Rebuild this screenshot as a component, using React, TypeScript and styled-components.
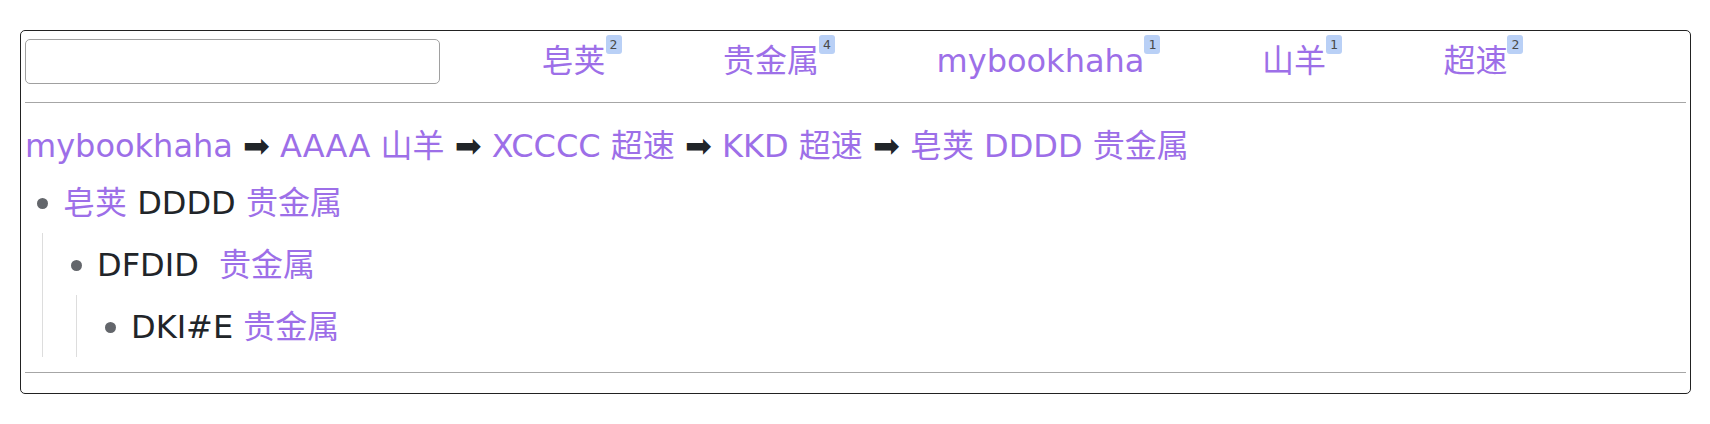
import React from 'react'
import styled, { createGlobalStyle } from 'styled-components'

const GlobalStyle = createGlobalStyle`
  body {
    margin: 0;
    background: #fff;
    color: #212529;
    font-family: 'DejaVu Sans', 'Noto Sans CJK SC', sans-serif;
  }
`

const LINK = '#9d6fe8'

const Page = styled.div`
  padding: 30px 19px 30px 20px;
`

const Card = styled.div`
  border: 1px solid #222;
  border-radius: 5px;
  padding: 8px 4px 20px;
`

const Header = styled.div`
  display: flex;
  align-items: center;
  gap: 101.5px;
  height: 45px;
`

const SearchInput = styled.input`
  box-sizing: border-box;
  width: 415px;
  height: 45px;
  margin: 0;
  border: 1px solid #a0a0a0;
  border-radius: 5px;
  background: #fff;
  outline: none;
`

const NavItem = styled.div`
  display: flex;
  align-items: flex-start;
  height: 45px;
`

const Link = styled.a`
  color: ${LINK};
  text-decoration: none;
  font-size: 32px;
`

const NavLink = styled(Link)`
  line-height: 45px;
`

const Badge = styled.span`
  box-sizing: border-box;
  margin-top: -4px;
  height: 19px;
  min-width: 16px;
  padding: 0 4px;
  border-radius: 3px;
  background: #b9d0f6;
  color: #4a4a4a;
  text-align: center;
  font: 13px/19px 'DejaVu Sans Mono', monospace;
`

const Divider = styled.hr<{ $gap: number }>`
  margin: ${({ $gap }) => $gap}px 0 0;
  border: none;
  border-top: 1px solid #a6a6a6;
`

const Crumbs = styled.div`
  margin-top: 19px;
  font-size: 32px;
  line-height: 48px;
  white-space: pre;
`

const Arrow = styled.span`
  color: #212529;
`

const TreeList = styled.ul<{ $nested?: boolean }>`
  list-style: none;
  margin: ${({ $nested }) => ($nested ? '0 0 0 17px' : '1px 0 0')};
  padding: 0 0 0 ${({ $nested }) => ($nested ? '16px' : '0')};
  border-left: ${({ $nested }) => ($nested ? '1px solid #ddd' : 'none')};
`

const Row = styled.div`
  display: flex;
  align-items: center;
  padding: 8px 0 6px;
  font-size: 32px;
  line-height: 48px;
`

const Dot = styled.span`
  flex-shrink: 0;
  width: 11px;
  height: 11px;
  margin: 0 15px 0 12px;
  border-radius: 50%;
  background: #63666b;
`

const Label = styled.span`
  white-space: pre;
`

type Part = { text: string; link?: boolean }
type Node = { parts: Part[]; children?: Node[] }

const nav = [
  { name: '皂荚', count: 2 },
  { name: '贵金属', count: 4 },
  { name: 'mybookhaha', count: 1 },
  { name: '山羊', count: 1 },
  { name: '超速', count: 2 },
]

const crumbs = ['mybookhaha', 'AAAA 山羊', 'XCCCC 超速', 'KKD 超速', '皂荚 DDDD 贵金属']

const tree: Node[] = [
  {
    parts: [{ text: '皂荚', link: true }, { text: ' DDDD ' }, { text: '贵金属', link: true }],
    children: [
      {
        parts: [{ text: 'DFDID  ' }, { text: '贵金属', link: true }],
        children: [{ parts: [{ text: 'DKI#E ' }, { text: '贵金属', link: true }] }],
      },
    ],
  },
]

const TreeNode: React.FC<{ node: Node }> = ({ node }) => (
  <li>
    <Row>
      <Dot />
      <Label>
        {node.parts.map((p, i) =>
          p.link ? (
            <Link key={i} href="#">
              {p.text}
            </Link>
          ) : (
            <React.Fragment key={i}>{p.text}</React.Fragment>
          ),
        )}
      </Label>
    </Row>
    {node.children && (
      <TreeList $nested>
        {node.children.map((c, i) => (
          <TreeNode key={i} node={c} />
        ))}
      </TreeList>
    )}
  </li>
)

export default function App() {
  return (
    <Page>
      <GlobalStyle />
      <Card>
        <Header>
          <SearchInput type="text" />
          {nav.map((n) => (
            <NavItem key={n.name}>
              <NavLink href="#">{n.name}</NavLink>
              <Badge>{n.count}</Badge>
            </NavItem>
          ))}
        </Header>
        <Divider $gap={18} />
        <Crumbs>
          {crumbs.map((c, i) => (
            <React.Fragment key={c + i}>
              {i > 0 && <Arrow> ➡ </Arrow>}
              <Link href="#">{c}</Link>
            </React.Fragment>
          ))}
        </Crumbs>
        <TreeList>
          {tree.map((n, i) => (
            <TreeNode key={i} node={n} />
          ))}
        </TreeList>
        <Divider $gap={15} />
      </Card>
    </Page>
  )
}
